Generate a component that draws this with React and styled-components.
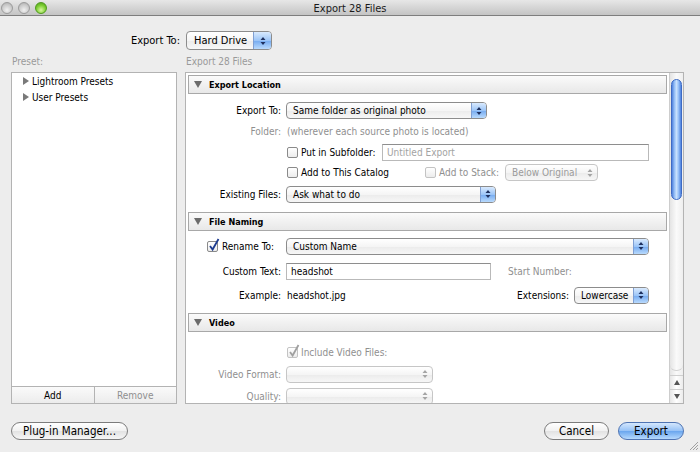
import React from 'react';
import styled, { createGlobalStyle } from 'styled-components';

const UI_FONT = '"DejaVu Sans Condensed", "Liberation Sans", sans-serif';
const COLOR_DIM = '#8f8f8f';
const COLOR_BORDER = '#b3b3b3';

const GlobalStyle = createGlobalStyle`
    html, body {
        margin: 0;
        padding: 0;
        background: #ededed;
    }
    body {
        font-family: ${UI_FONT};
        font-size: 10px;
        color: #000;
    }
`;

const Window = styled.div`
    position: relative;
    width: 700px;
    height: 452px;
    overflow: hidden;
    display: flex;
    flex-direction: column;
    background: #ededed;
`;

const TitleBar = styled.div`
    height: 15px;
    display: grid;
    grid-template-columns: 1fr auto 1fr;
    align-items: center;
    background: linear-gradient(#e7e7e7, #c4c4c4);
    border-bottom: 1px solid #7e7e7e;
`;

const Lights = styled.div`
    display: flex;
    gap: 5px;
    padding-left: 1px;
`;

const Light = styled.span`
    width: 12px;
    height: 12px;
    box-sizing: border-box;
    border-radius: 50%;
    border: 1px solid ${props => (props.$on ? '#4f9a1e' : '#9b9b9b')};
    background: ${props => (props.$on
        ? 'radial-gradient(circle at 50% 70%, #d8f7a0, #7ccd32 55%, #4c9b16)'
        : 'radial-gradient(circle at 50% 70%, #f0f0f0, #c9c9c9 60%, #a9a9a9)')};
`;

const WindowTitle = styled.div`
    font-size: 11px;
    color: #1a1a1a;
    padding-top: 1px;
`;

const DestRow = styled.div`
    display: flex;
    align-items: center;
    height: 19px;
    margin-top: 15px;
`;

const DestLabel = styled.div`
    width: 180px;
    margin-right: 6px;
    text-align: right;
    font-size: 11px;
`;

const CaptionRow = styled.div`
    display: flex;
    height: 12px;
    margin-top: 6px;
    color: #9a9a9a;
    font-size: 10px;
    line-height: 12px;
`;

const Caption = styled.div`
    width: ${props => props.$w}px;
    padding-left: ${props => props.$pad}px;
    box-sizing: border-box;
`;

const Main = styled.div`
    display: flex;
    gap: 8px;
    height: 332px;
    margin-top: 4px;
    padding: 0 16px 0 11px;
`;

const PresetPanel = styled.div`
    width: 166px;
    box-sizing: border-box;
    display: flex;
    flex-direction: column;
    background: #fff;
    border: 1px solid ${COLOR_BORDER};
`;

const PresetList = styled.div`
    flex: 1;
`;

const PresetItem = styled.div`
    height: 16px;
    display: flex;
    align-items: center;
    gap: 3px;
    padding-left: 11px;
`;

const PresetButtons = styled.div`
    display: flex;
    height: 16px;
    border-top: 1px solid ${COLOR_BORDER};
    background: linear-gradient(#fafafa, #ececec);
`;

const PresetButton = styled.div`
    flex: 1;
    display: flex;
    align-items: center;
    justify-content: center;
    color: ${props => (props.$dim ? COLOR_DIM : '#000')};
    border-left: ${props => (props.$split ? `1px solid ${COLOR_BORDER}` : 'none')};
`;

const ExportPanel = styled.div`
    flex: 1;
    display: flex;
    background: #fff;
    border: 1px solid ${COLOR_BORDER};
`;

const PanelContent = styled.div`
    flex: 1;
    overflow: hidden;
    padding-top: 2px;
`;

const SectionHeader = styled.div`
    height: 19px;
    box-sizing: border-box;
    margin: 0 2px;
    display: flex;
    align-items: center;
    gap: 7px;
    padding-left: 5px;
    border: 1px solid #a8a8a8;
    background: linear-gradient(#fbfbfb, #f1f1f1 50%, #e8e8e8);
    font-weight: bold;
    font-size: 9px;
`;

const SectionBody = styled.div`
    padding: ${props => props.$top}px 0 ${props => props.$bottom}px;
`;

const Row = styled.div`
    display: flex;
    align-items: center;
    height: ${props => props.$h}px;
    padding-right: 20px;
`;

const RowLabel = styled.div`
    width: 95px;
    flex: none;
    margin-right: 5px;
    text-align: right;
    white-space: nowrap;
    color: ${props => (props.$dim ? COLOR_DIM : '#000')};
`;

const CheckLabel = styled.div`
    width: 100px;
    flex: none;
    box-sizing: border-box;
    display: flex;
    align-items: center;
    gap: 4px;
    padding-left: 21px;
    white-space: nowrap;
`;

const FieldText = styled.span`
    padding-left: 1px;
    white-space: nowrap;
    color: ${props => (props.$dim ? COLOR_DIM : '#000')};
    margin-left: ${props => props.$gap || 0}px;
`;

const CheckGroup = styled.div`
    width: ${props => props.$w}px;
    flex: none;
    box-sizing: border-box;
    display: flex;
    align-items: center;
    gap: 3px;
    padding-left: ${props => props.$pad || 0}px;
    white-space: nowrap;
    color: ${props => (props.$dim ? COLOR_DIM : '#000')};
`;

const Box = styled.span`
    position: relative;
    width: 11px;
    height: 11px;
    flex: none;
    box-sizing: border-box;
    border: 1px solid ${props => (props.$dim ? '#c3c3c3' : '#8a8a8a')};
    border-radius: 2px;
    background: linear-gradient(#ffffff, #ececec);

    svg {
        position: absolute;
        left: 0;
        top: -4px;
        overflow: visible;
    }
`;

const TextField = styled.div`
    height: 17px;
    box-sizing: border-box;
    display: flex;
    align-items: center;
    padding-left: 4px;
    width: ${props => (props.$w ? `${props.$w}px` : 'auto')};
    flex: ${props => (props.$w ? 'none' : 1)};
    border: 1px solid #b9b9b9;
    border-top-color: #8e8e8e;
    background: #fff;
    color: ${props => (props.$dim ? '#a3a3a3' : '#000')};
`;

const Spacer = styled.div`
    flex: 1;
`;

const PopupBox = styled.div`
    display: flex;
    align-items: center;
    box-sizing: border-box;
    height: ${props => props.$h || 17}px;
    width: ${props => (props.$w ? `${props.$w}px` : 'auto')};
    flex: ${props => (props.$w ? 'none' : 1)};
    overflow: hidden;
    border: 1px solid ${props => (props.$dim ? '#c6c6c6' : '#8c8c8c')};
    border-radius: 4px;
    background: linear-gradient(#ffffff, #f5f5f5 50%, #ebebeb 51%, #f7f7f7);
    font-size: ${props => props.$fs || 10}px;
    color: ${props => (props.$dim ? '#9b9b9b' : '#000')};
`;

const PopupText = styled.span`
    flex: 1;
    padding-left: ${props => props.$pad || 6}px;
    white-space: nowrap;
`;

const PopupKnob = styled.span`
    width: ${props => props.$w || 14}px;
    align-self: stretch;
    display: flex;
    align-items: center;
    justify-content: center;
    border-left: 1px solid ${props => (props.$dim ? 'transparent' : '#7f9fd3')};
    background: ${props => (props.$dim
        ? 'transparent'
        : 'linear-gradient(#d9eafe, #9cc5f7 50%, #74aaf0 51%, #b9dafd)')};
`;

const Scroller = styled.div`
    width: 13px;
    display: flex;
    flex-direction: column;
    border-left: 1px solid #cdcdcd;
    background: linear-gradient(90deg, #e4e4e4, #fafafa 50%, #eeeeee);
`;

const ScrollThumb = styled.div`
    height: 121px;
    margin: 6px 1px 0;
    box-sizing: border-box;
    border-radius: 6px;
    border: 1px solid #3e6bc4;
    background: linear-gradient(90deg, #4f82de, #9cc4f8 30%, #c7e0fd 50%, #9cc4f8 70%, #4f82de);
`;

const ScrollTrackEnd = styled.div`
    flex: 1;
    border-bottom: 1px solid #d3d3d3;
    border-radius: 0 0 6px 6px;
    margin-bottom: 4px;
`;

const ScrollArrow = styled.div`
    height: 13px;
    display: flex;
    align-items: center;
    justify-content: center;
    border-top: 1px solid #cfcfcf;
    background: linear-gradient(90deg, #e6e6e6, #ffffff 50%, #ececec);
`;

const Footer = styled.div`
    display: flex;
    align-items: center;
    gap: 9px;
    height: 18px;
    margin-top: 18px;
    padding: 0 16px 0 11px;
`;

const PillButton = styled.div`
    width: ${props => props.$w}px;
    height: 18px;
    box-sizing: border-box;
    display: flex;
    align-items: center;
    justify-content: center;
    border-radius: 9px;
    font-size: 11.5px;
    border: 1px solid ${props => (props.$primary ? '#4f74b3' : '#7c7c7c')};
    background: ${props => (props.$primary
        ? 'linear-gradient(#d4e7fd, #95c1f6 50%, #6aa6ee 51%, #b5d9fd)'
        : 'linear-gradient(#ffffff, #f1f1f1 50%, #e2e2e2 51%, #f6f6f6)')};
`;

const Grip = styled.svg`
    position: absolute;
    right: 1px;
    bottom: 1px;
`;

const DisclosureRight = () => (
    <svg width="6" height="8" viewBox="0 0 6 8">
        <path d="M0 0 L6 4 L0 8 Z" fill="#7a7a7a" />
    </svg>
);

const DisclosureDown = () => (
    <svg width="8" height="7" viewBox="0 0 8 7">
        <path d="M0 0 L8 0 L4 7 Z" fill="#6b6b6b" />
    </svg>
);

const UpDown = ({ dim }) => (
    <svg width="6" height="10" viewBox="0 0 6 10">
        <path d="M3 1 L5.5 4 L0.5 4 Z M0.5 6 L5.5 6 L3 9 Z" fill={dim ? '#a5a5a5' : '#1f3160'} />
    </svg>
);

const Checkbox = ({ checked, dim }) => (
    <Box $dim={dim}>
        {checked && (
            <svg width="12" height="14" viewBox="0 0 12 14">
                <path d="M2 8 L4.6 11.5 L10.5 1" fill="none" stroke={dim ? '#a0a0a0' : '#1d3b8f'} strokeWidth="1.8" />
            </svg>
        )}
    </Box>
);

const Popup = ({ children, w, h, fs, pad, knob, dim }) => (
    <PopupBox $w={w} $h={h} $fs={fs} $dim={dim}>
        <PopupText $pad={pad}>{children}</PopupText>
        <PopupKnob $w={knob} $dim={dim}><UpDown dim={dim} /></PopupKnob>
    </PopupBox>
);

const Section = ({ title, top, bottom, children }) => (
    <>
        <SectionHeader><DisclosureDown />{title}</SectionHeader>
        <SectionBody $top={top} $bottom={bottom}>{children}</SectionBody>
    </>
);

const App = () => {
    return (
        <Window>
            <GlobalStyle />
            <TitleBar>
                <Lights>
                    <Light />
                    <Light />
                    <Light $on />
                </Lights>
                <WindowTitle>Export 28 Files</WindowTitle>
                <div />
            </TitleBar>

            <DestRow>
                <DestLabel>Export To:</DestLabel>
                <Popup w={86} h={19} fs={11} pad={7} knob={17}>Hard Drive</Popup>
            </DestRow>

            <CaptionRow>
                <Caption $w={186} $pad={12}>Preset:</Caption>
                <Caption>Export 28 Files</Caption>
            </CaptionRow>

            <Main>
                <PresetPanel>
                    <PresetList>
                        <PresetItem><DisclosureRight />Lightroom Presets</PresetItem>
                        <PresetItem><DisclosureRight />User Presets</PresetItem>
                    </PresetList>
                    <PresetButtons>
                        <PresetButton>Add</PresetButton>
                        <PresetButton $dim $split>Remove</PresetButton>
                    </PresetButtons>
                </PresetPanel>

                <ExportPanel>
                    <PanelContent>
                        <Section title="Export Location" top={6} bottom={7}>
                            <Row $h={21}>
                                <RowLabel>Export To:</RowLabel>
                                <Popup w={201}>Same folder as original photo</Popup>
                            </Row>
                            <Row $h={21}>
                                <RowLabel $dim>Folder:</RowLabel>
                                <FieldText $dim>(wherever each source photo is located)</FieldText>
                            </Row>
                            <Row $h={20}>
                                <RowLabel />
                                <CheckGroup $w={96} $pad={1}><Checkbox />Put in Subfolder:</CheckGroup>
                                <TextField $dim>Untitled Export</TextField>
                            </Row>
                            <Row $h={21}>
                                <RowLabel />
                                <CheckGroup $w={139} $pad={1}><Checkbox />Add to This Catalog</CheckGroup>
                                <CheckGroup $w={80} $dim><Checkbox dim />Add to Stack:</CheckGroup>
                                <Popup w={93} dim>Below Original</Popup>
                            </Row>
                            <Row $h={22}>
                                <RowLabel>Existing Files:</RowLabel>
                                <Popup w={210}>Ask what to do</Popup>
                            </Row>
                        </Section>

                        <Section title="File Naming" top={4} bottom={8}>
                            <Row $h={22}>
                                <CheckLabel><Checkbox checked />Rename To:</CheckLabel>
                                <Popup>Custom Name</Popup>
                            </Row>
                            <Row $h={28}>
                                <RowLabel>Custom Text:</RowLabel>
                                <TextField $w={205}>headshot</TextField>
                                <FieldText $dim $gap={16}>Start Number:</FieldText>
                            </Row>
                            <Row $h={20}>
                                <RowLabel>Example:</RowLabel>
                                <FieldText>headshot.jpg</FieldText>
                                <Spacer />
                                <FieldText>Extensions:</FieldText>
                                <FieldText $gap={4} />
                                <Popup w={75}>Lowercase</Popup>
                            </Row>
                        </Section>

                        <Section title="Video" top={9} bottom={0}>
                            <Row $h={22}>
                                <RowLabel />
                                <CheckGroup $w={200} $pad={1} $dim><Checkbox checked dim />Include Video Files:</CheckGroup>
                            </Row>
                            <Row $h={22}>
                                <RowLabel $dim>Video Format:</RowLabel>
                                <Popup w={147} dim />
                            </Row>
                            <Row $h={22}>
                                <RowLabel $dim>Quality:</RowLabel>
                                <Popup w={147} dim />
                            </Row>
                        </Section>
                    </PanelContent>

                    <Scroller>
                        <ScrollThumb />
                        <ScrollTrackEnd />
                        <ScrollArrow>
                            <svg width="6" height="5" viewBox="0 0 6 5"><path d="M3 0 L6 5 L0 5 Z" fill="#555" /></svg>
                        </ScrollArrow>
                        <ScrollArrow>
                            <svg width="6" height="5" viewBox="0 0 6 5"><path d="M0 0 L6 0 L3 5 Z" fill="#555" /></svg>
                        </ScrollArrow>
                    </Scroller>
                </ExportPanel>
            </Main>

            <Footer>
                <PillButton $w={117}>Plug-in Manager...</PillButton>
                <Spacer />
                <PillButton $w={65}>Cancel</PillButton>
                <PillButton $w={66} $primary>Export</PillButton>
            </Footer>

            <Grip width="10" height="10" viewBox="0 0 10 10">
                <path d="M9 1 L1 9 M9 4 L4 9 M9 7 L7 9" stroke="#a0a0a0" strokeWidth="1" />
            </Grip>
        </Window>
    );
};

export default App;
